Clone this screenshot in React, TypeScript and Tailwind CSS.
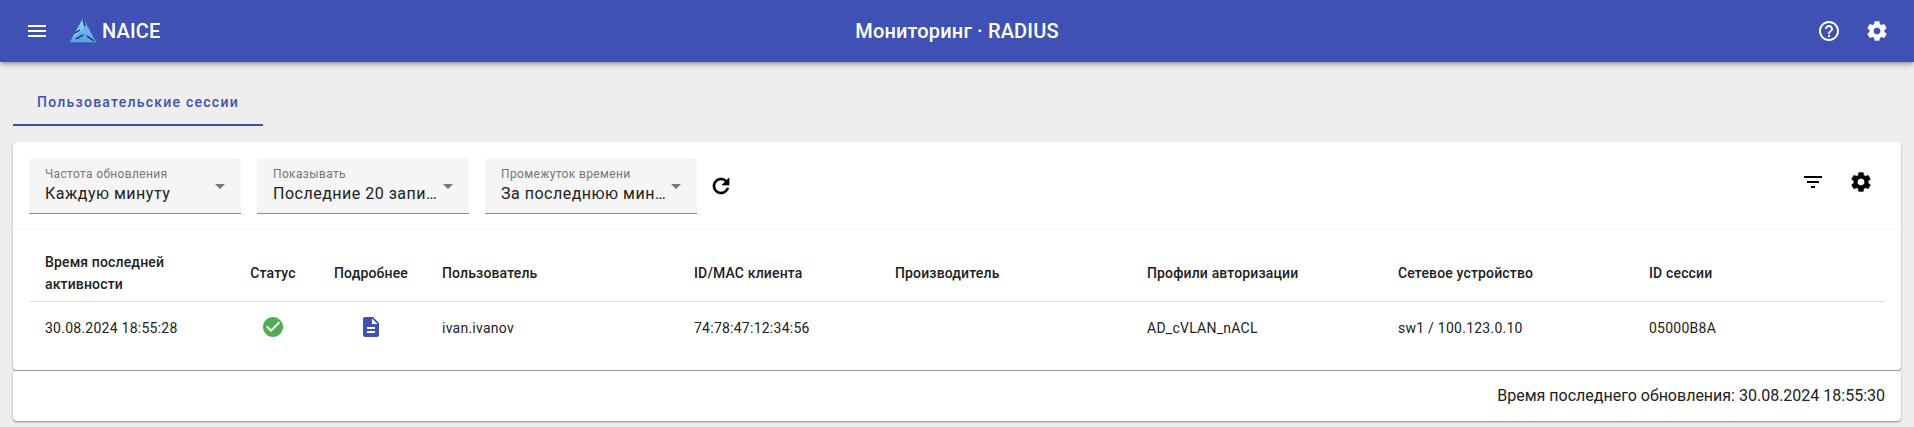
import {
  MdCheckCircle,
  MdDescription,
  MdFilterList,
  MdHelpOutline,
  MdMenu,
} from "react-icons/md"

const columns = [
  { label: "Время последней активности", width: "w-[200px]", cell: "px-4" },
  { label: "Статус", width: "w-[88px]", cell: "px-4 text-center" },
  { label: "Подробнее", width: "w-[108px]", cell: "px-4 text-center" },
  { label: "Пользователь", width: "w-[253px]", cell: "pl-[17px] pr-4" },
  { label: "ID/MAC клиента", width: "w-[201px]", cell: "px-4" },
  { label: "Производитель", width: "w-[252px]", cell: "px-4" },
  { label: "Профили авторизации", width: "w-[251px]", cell: "px-4" },
  { label: "Сетевое устройство", width: "w-[251px]", cell: "px-4" },
  { label: "ID сессии", width: "flex-1", cell: "px-4" },
]

const filters = [
  { label: "Частота обновления", value: "Каждую минуту" },
  { label: "Показывать", value: "Последние 20 записей" },
  { label: "Промежуток времени", value: "За последнюю минуту" },
]

// thickened by hand, the font icons in the picture are heavier than the react-icons ones
function BoldIcon({ d, weight, className }: { d: string; weight: number; className?: string }) {
  return (
    <svg width="24" height="24" viewBox="0 0 24 24" className={className}>
      <path d={d} fill="currentColor" stroke="currentColor" strokeWidth={weight} />
    </svg>
  )
}

const gearPath =
  "M19.14 12.94c.04-.3.06-.61.06-.94 0-.32-.02-.64-.07-.94l2.03-1.58a.49.49 0 00.12-.61l-1.92-3.32a.488.488 0 00-.59-.22l-2.39.96c-.5-.38-1.03-.7-1.62-.94l-.36-2.54a.484.484 0 00-.48-.41h-3.84c-.24 0-.43.17-.47.41l-.36 2.54c-.59.24-1.13.57-1.62.94l-2.39-.96c-.22-.08-.47 0-.59.22L2.74 8.87c-.12.21-.08.47.12.61l2.03 1.58c-.05.3-.09.63-.09.94s.02.64.07.94l-2.03 1.58a.49.49 0 00-.12.61l1.92 3.32c.12.22.37.29.59.22l2.39-.96c.5.38 1.03.7 1.62.94l.36 2.54c.05.24.24.41.48.41h3.84c.24 0 .44-.17.47-.41l.36-2.54c.59-.24 1.13-.56 1.62-.94l2.39.96c.22.08.47 0 .59-.22l1.92-3.32c.12-.22.07-.47-.12-.61l-2.01-1.58zM12 15.6c-1.98 0-3.6-1.62-3.6-3.6s1.62-3.6 3.6-3.6 3.6 1.62 3.6 3.6-1.62 3.6-3.6 3.6z"
const refreshPath =
  "M17.65 6.35A7.958 7.958 0 0012 4c-4.42 0-7.99 3.58-7.99 8s3.57 8 7.99 8c3.73 0 6.84-2.55 7.73-6h-2.08A5.99 5.99 0 0112 18c-3.31 0-6-2.69-6-6s2.69-6 6-6c1.66 0 3.14.69 4.22 1.78L13 11h7V4l-2.35 2.35z"

function Logo() {
  return (
    <svg width="28" height="26" viewBox="0 0 28 26" className="mb-[2px] shrink-0">
      <path d="M14 0.5 L27.5 25.5 L0.5 25.5 Z" fill="#6db3f2" />
      <path d="M14 0.5 L14 12 L5 20 L0.5 25.5 Z" fill="#8cc8f8" />
      <path d="M5 20 L14 15 L23 21 L27.5 25.5 L0.5 25.5 Z" fill="#5fa4ea" />
      <path d="M14 2 L16 9 M6 16 L11 13 M7 22 L14 18 M18 19 L25 24" stroke="#0f2a55" strokeWidth="1.3" fill="none" />
      <path d="M14 0.5 L27.5 25.5 L0.5 25.5 Z" fill="none" stroke="#2f6cb0" strokeWidth="0.8" />
    </svg>
  )
}

function FilterSelect({ label, value }: { label: string; value: string }) {
  return (
    <div className="relative h-14 w-[212px] rounded-t border-b border-[#8c8c8c] bg-[#f5f5f5] pl-4 pr-[29px] pt-[9px]">
      <div className="text-xs leading-[14px] tracking-[0.35px] text-[#757575]">{label}</div>
      <div className="mt-[1px] truncate text-base leading-6 tracking-[0.5px] text-[#212121]">{value}</div>
      <div className="absolute right-[16px] top-[26px] h-0 w-0 border-x-[5px] border-t-[5px] border-x-transparent border-t-[#757575]" />
    </div>
  )
}

export default function App() {
  return (
    <div className="h-[427px] overflow-hidden bg-[#eeeeee] font-['Roboto',sans-serif]">
      <header className="flex h-[62px] items-center justify-between bg-[#3f51b5] px-[25px] text-white shadow-[0_2px_4px_-1px_rgba(0,0,0,0.3),0_4px_5px_0_rgba(0,0,0,0.14)]">
        <div className="flex w-[300px] items-center">
          <MdMenu size={24} />
          <div className="ml-[20px] flex"><Logo /></div>
          <span className="ml-[5px] text-xl font-medium leading-none tracking-[0.15px]">NAICE</span>
        </div>
        <div className="text-xl font-medium tracking-[0.15px]">Мониторинг · RADIUS</div>
        <div className="flex w-[300px] items-center justify-end gap-6">
          <MdHelpOutline size={24} />
          <BoldIcon d={gearPath} weight={0.4} />
        </div>
      </header>

      <div className="px-[13px]">
        <div className="flex h-[64px] w-[250px] items-center justify-center border-b-2 border-[#3f51b5] pt-[18px] text-sm font-medium tracking-[1.25px] text-[#3f51b5]">
          Пользовательские сессии
        </div>

        <main className="mt-4 h-[228px] rounded bg-white shadow-[0_1px_2px_rgba(0,0,0,0.45)]">
          <div className="flex h-[87px] items-start justify-between px-4 pt-4">
            <div className="flex items-center gap-4">
              {filters.map((f) => (
                <FilterSelect key={f.label} label={f.label} value={f.value} />
              ))}
              <BoldIcon d={refreshPath} weight={0.7} className="ml-[-4px] text-black" />
            </div>
            <div className="flex items-center gap-6 pr-3 pt-[12px] text-black">
              <MdFilterList size={24} />
              <BoldIcon d={gearPath} weight={0.4} />
            </div>
          </div>

          <div className="rounded-t border-t border-[#f8f8f8] px-4 shadow-[0_-1px_1px_rgba(0,0,0,0.015)]">
            <div className="flex h-[72px] items-center border-b border-[#e0e0e0] pt-[15px] text-sm font-medium leading-[22px] tracking-[0.15px] text-[#212121]">
              {columns.map((c) => (
                <div key={c.label} className={`${c.width} shrink-0 ${c.cell}`}>
                  {c.label}
                </div>
              ))}
            </div>
            <div className="flex h-[52px] items-center text-sm tracking-[0.25px] text-[#212121]">
              <div className="w-[200px] shrink-0 px-4">30.08.2024 18:55:28</div>
              <div className="flex w-[88px] shrink-0 justify-center pb-[2px]"><MdCheckCircle size={24} className="text-[#4caf50]" /></div>
              <div className="flex w-[108px] shrink-0 justify-center pb-[2px]"><MdDescription size={24} className="text-[#3f51b5]" /></div>
              <div className="w-[253px] shrink-0 pl-[17px] pr-4">ivan.ivanov</div>
              <div className="w-[201px] shrink-0 px-4">74:78:47:12:34:56</div>
              <div className="w-[252px] shrink-0 px-4" />
              <div className="w-[251px] shrink-0 px-4">AD_cVLAN_nACL</div>
              <div className="w-[251px] shrink-0 px-4">sw1 / 100.123.0.10</div>
              <div className="flex-1 px-4">05000B8A</div>
            </div>
          </div>
        </main>

        <footer className="mt-[1px] flex h-[50px] items-center justify-end rounded bg-white pr-4 text-base text-[#212121] shadow-[0_1px_2px_rgba(0,0,0,0.45)]">
          Время последнего обновления: 30.08.2024 18:55:30
        </footer>
      </div>
    </div>
  )
}
